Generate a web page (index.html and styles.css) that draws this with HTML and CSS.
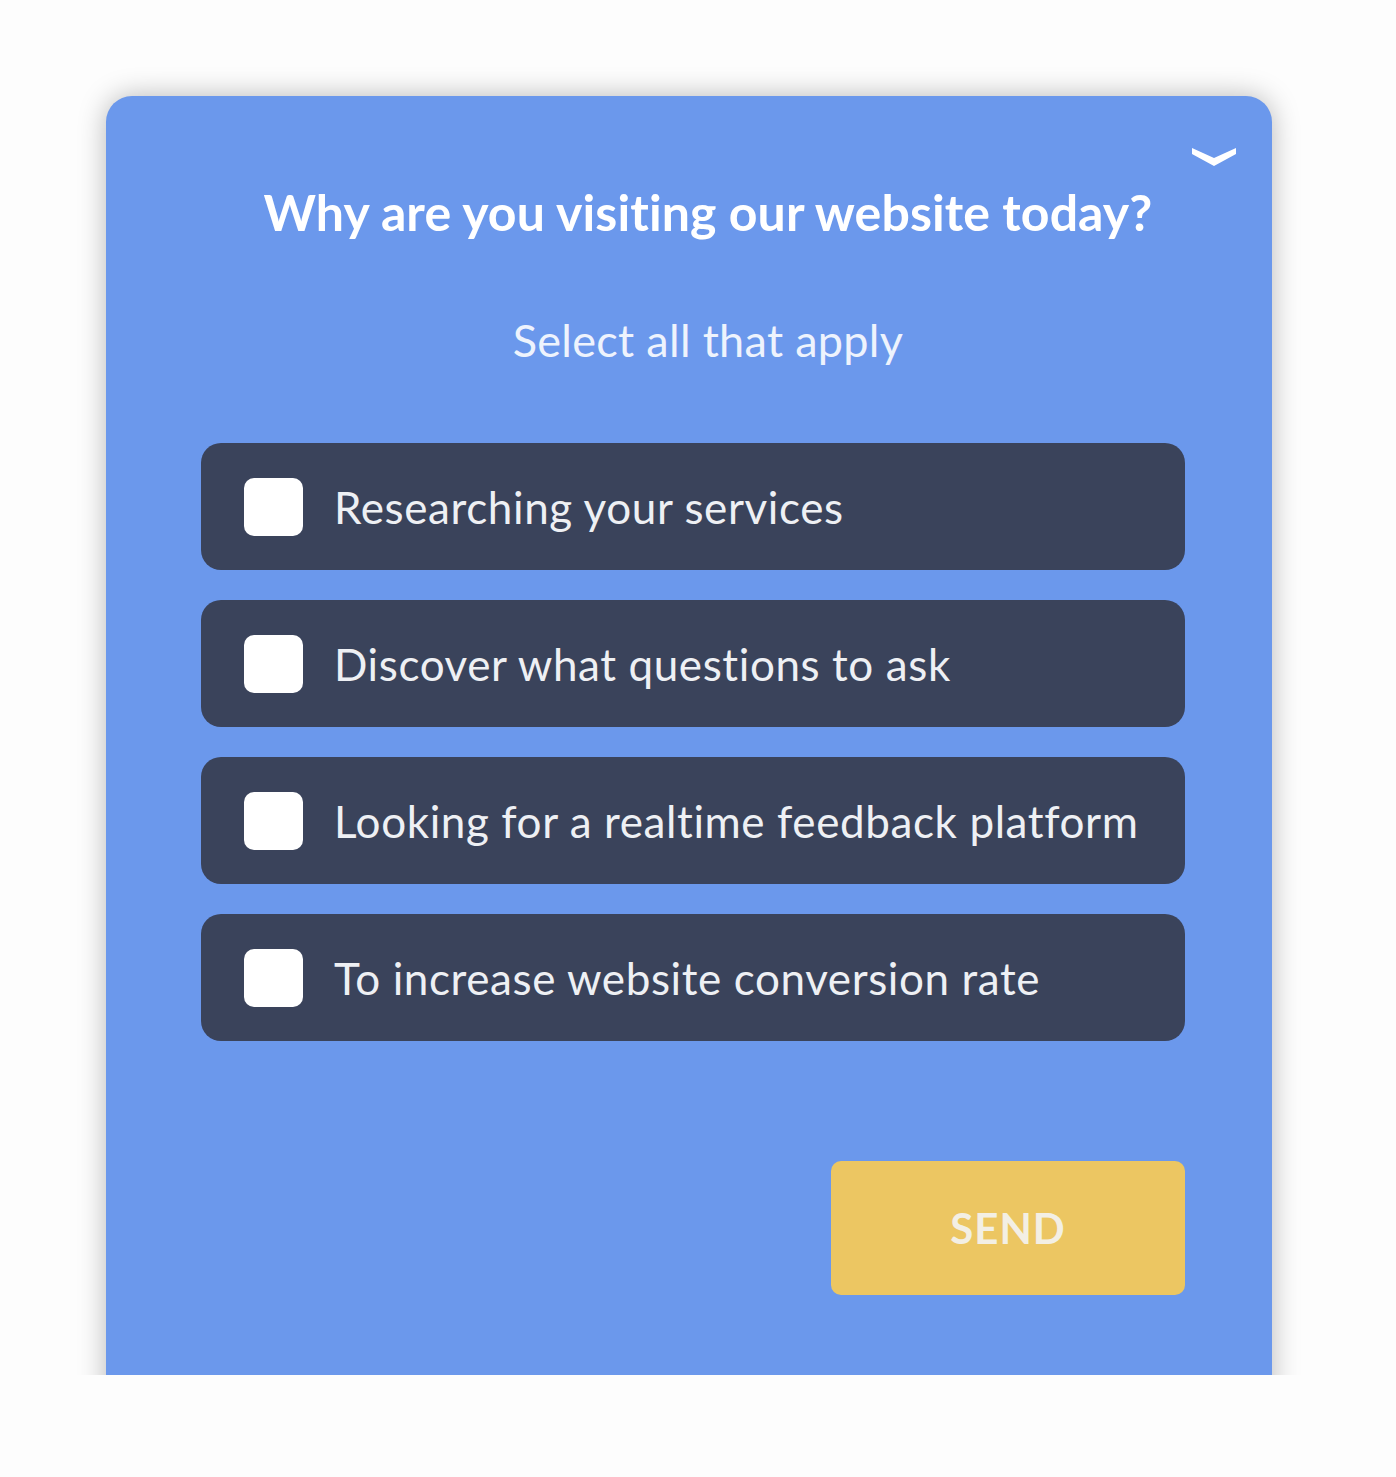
FILE: index.html
```html
<!DOCTYPE html>
<html>
<head>
<meta charset="utf-8">
<link rel="stylesheet" href="styles.css">
</head>
<body>
<div class="stage">
  <div class="card">
    <button class="collapse" aria-label="Collapse">
      <svg width="48" height="26" viewBox="0 0 48 26"><path d="M2 6 L24 16 L46 6 L46 12 L24 24 L2 12 Z" fill="#fff"/></svg>
    </button>
    <div class="head">
      <h1 class="title">Why are you visiting our website today?</h1>
      <p class="sub">Select all that apply</p>
    </div>
    <div class="options">
      <label class="opt"><span class="box"></span><span class="txt">Researching your services</span></label>
      <label class="opt"><span class="box"></span><span class="txt">Discover what questions to ask</span></label>
      <label class="opt"><span class="box"></span><span class="txt">Looking for a realtime feedback platform</span></label>
      <label class="opt"><span class="box"></span><span class="txt">To increase website conversion rate</span></label>
    </div>
    <div class="actions">
      <button class="send">SEND</button>
    </div>
  </div>
</div>
</body>
</html>
```

FILE: styles.css
```css
html, body {
  margin: 0;
  padding: 0;
  background: #fdfdfd;
}
.stage {
  height: 1375px;
  overflow: hidden;
  padding: 96px 0 0 106px;
  box-sizing: border-box;
}
.card {
  position: relative;
  width: 1166px;
  height: 1400px;
  background: #6b98ec;
  border-radius: 26px;
  box-shadow: 0 0 28px rgba(0, 0, 0, 0.28);
  box-sizing: border-box;
  padding: 0 87px 0 95px;
  font-family: Lato, "Noto Sans", sans-serif;
  font-variant-ligatures: none;
  color: #fff;
}
.collapse {
  position: absolute;
  top: 46px;
  right: 34px;
  background: none;
  border: 0;
  padding: 0;
  line-height: 0;
}
.head {
  padding-top: 86px;
  padding-left: 30px;
  text-align: center;
}
.title {
  margin: 0;
  font-size: 50px;
  font-weight: 700;
  line-height: 60px;
  letter-spacing: 0.1px;
}
.sub {
  margin: 68px 0 0;
  font-size: 45px;
  font-weight: 400;
  line-height: 60px;
  letter-spacing: 0.3px;
  color: #eef3fd;
}
.options {
  margin-top: 73px;
  display: flex;
  flex-direction: column;
  gap: 30px;
}
.opt {
  display: flex;
  align-items: center;
  height: 127px;
  background: #3a435b;
  border-radius: 20px;
  padding-left: 43px;
}
.box {
  width: 59px;
  height: 58px;
  border-radius: 10px;
  background: #fff;
  flex: none;
}
.txt {
  margin-left: 31px;
  font-size: 44px;
  letter-spacing: 0.6px;
  color: #eef0f4;
}
.actions {
  margin-top: 120px;
  display: flex;
  justify-content: flex-end;
}
.send {
  width: 354px;
  height: 134px;
  background: #ecc662;
  border: 0;
  border-radius: 10px;
  font-family: Lato, "Noto Sans", sans-serif;
  font-size: 42px;
  font-weight: 700;
  color: #f3efe4;
  letter-spacing: 1px;
}
```
